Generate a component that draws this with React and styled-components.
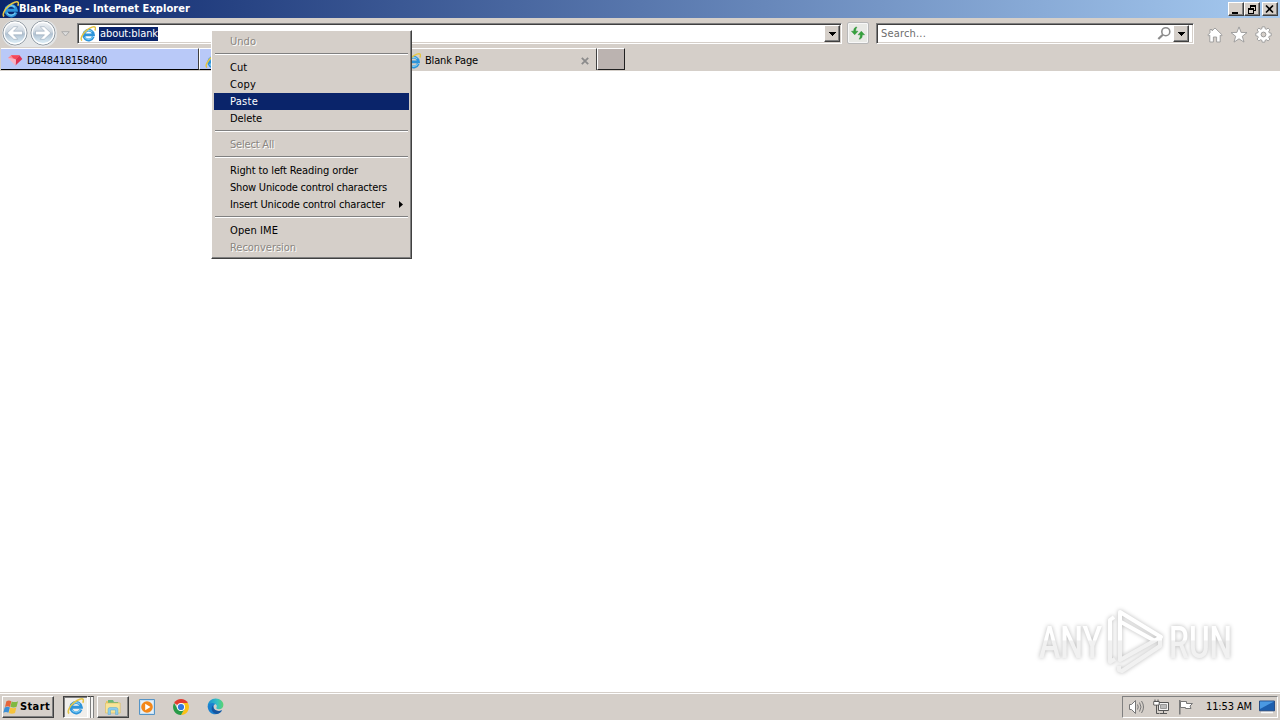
import React from 'react';
import styled, { createGlobalStyle, css } from 'styled-components';

const menuItems = [
  { label: 'Undo', disabled: true, width: 26 },
  { divider: true },
  { label: 'Cut', width: 17 },
  { label: 'Copy', width: 26 },
  { label: 'Paste', width: 28, active: true },
  { label: 'Delete', width: 32 },
  { divider: true },
  { label: 'Select All', disabled: true, width: 44 },
  { divider: true },
  { label: 'Right to left Reading order', width: 128 },
  { label: 'Show Unicode control characters', width: 157 },
  { label: 'Insert Unicode control character', width: 155, submenu: true },
  { divider: true },
  { label: 'Open IME', width: 48 },
  { label: 'Reconversion', disabled: true, width: 66 },
];

// Spreads a label over the width it has in Tahoma
const Label = ({ children, width }) => {
  const ref = React.useRef(null);
  const [spacing, setSpacing] = React.useState(0);

  React.useLayoutEffect(() => {
    const natural = ref.current.getBoundingClientRect().width;
    setSpacing((width - natural) / children.length);
  }, [children, width]);

  return (
    <Fitted ref={ref} style={{ letterSpacing: `${spacing}px` }}>
      {children}
    </Fitted>
  );
};

const IeIcon = ({ size = 16 }) => (
  <Icon width={size} height={size} viewBox="0 0 16 16">
    <path
      d="M13.2 10.8A4.9 4.9 0 1 1 13.5 8.8H5"
      fill="none"
      stroke="#2d94da"
      strokeWidth="2.8"
    />
    <path
      d="M12.6 11A4.6 4.6 0 0 1 4.6 11M4.4 6.8a4.8 4.8 0 0 1 7.7-.8"
      fill="none"
      stroke="#83d0f4"
      strokeWidth="1.1"
    />
    <path
      d="M2 14.6C-.2 13 2.4 7.7 6.8 4.2 10.3 1.3 14.4-.2 15.3 1.5c.4.8.1 2-.5 3"
      fill="none"
      stroke="#e5c544"
      strokeWidth="1.5"
    />
  </Icon>
);

const Arrow = ({ flipped }) => (
  <Icon width="26" height="26" viewBox="0 0 26 26">
    <defs>
      <linearGradient id="orb" x1="0" y1="0" x2="0" y2="1">
        <stop offset="0" stopColor="#f4f6f8" />
        <stop offset=".46" stopColor="#cbd5df" />
        <stop offset=".54" stopColor="#b0c1d1" />
        <stop offset="1" stopColor="#e6f7ff" />
      </linearGradient>
    </defs>
    <circle cx="13" cy="13" r="12" fill="url(#orb)" stroke="#8d969f" />
    <circle cx="13" cy="13" r="10.8" fill="none" stroke="#fff" strokeWidth="1.2" />
    <path
      transform={flipped ? 'matrix(-1 0 0 1 26 0)' : undefined}
      d="M5.2 13l6.6-6.3h4L11.5 11.2h9v3.6h-9l4.3 4.5h-4z"
      fill="#fff"
      stroke="#98a8b8"
      strokeWidth=".6"
    />
  </Icon>
);

const DownArrow = () => (
  <Icon width="7" height="4" viewBox="0 0 7 4" shapeRendering="crispEdges">
    <path d="M0 0h7L3.5 4z" fill="#000" />
  </Icon>
);

const RefreshIcon = () => (
  <Icon width="16" height="16" viewBox="0 0 16 16" fill="#35a23c" stroke="#1f862b" strokeWidth=".4">
    <path d="M7 2C4.6 2 3.6 3.8 3.7 6.2H1.4l3.3 3.6L8 6.2H5.7C5.6 4.6 6 3.4 7 2z" />
    <path d="M9 14.2c2.4 0 3.4-1.8 3.3-4.4h2.3l-3.3-3.6L8 9.8h2.3c.1 1.8-.3 3-1.3 4.4z" />
  </Icon>
);

const SearchIcon = () => (
  <Icon width="15" height="15" viewBox="0 0 15 15" fill="none" stroke="#8b8b8b">
    <circle cx="8.8" cy="5.7" r="4" strokeWidth="1.6" />
    <path d="M5.8 8.7L1.3 13" strokeWidth="2.2" />
  </Icon>
);

const HomeIcon = () => (
  <Icon width="16" height="16" viewBox="0 0 16 16" fill="#fff" stroke="#999" strokeWidth=".9">
    <path d="M8 1l7.2 7-1 1-1-.8V15H9.6v-5H6.4v5H2.8V8.2l-1 .8-1-1L3 5.8V2.5h2v1.4z" />
  </Icon>
);

const StarIcon = () => (
  <Icon width="18" height="17" viewBox="0 0 18 17" fill="#fff" stroke="#999" strokeWidth=".9">
    <path d="M9 .9l2.1 5.5 5.9.2-4.7 3.7 1.7 5.8L9 12.8l-5 3.3 1.7-5.8L1 6.6l5.9-.2z" />
  </Icon>
);

const GearIcon = () => (
  <Icon width="17" height="17" viewBox="0 0 17 17" stroke="#999">
    <path
      d="M7.2.8h2.6l.4 2 1.2.5 1.7-1.2 1.8 1.8-1.2 1.7.5 1.2 2 .4v2.6l-2 .4-.5 1.2 1.2 1.7-1.8 1.8-1.7-1.2-1.2.5-.4 2H7.2l-.4-2-1.2-.5-1.7 1.2-1.8-1.8 1.2-1.7-.5-1.2-2-.4V7.2l2-.4.5-1.2-1.2-1.7 1.8-1.8 1.7 1.2 1.2-.5z"
      fill="#fff"
      strokeWidth=".9"
    />
    <circle cx="8.5" cy="8.5" r="2.4" fill="#d5cfc9" />
  </Icon>
);

const FaviconIcon = () => (
  <Icon width="16" height="16" viewBox="0 0 16 16">
    <path d="M1 5l3-2.8h8.5L9 6.5z" fill="#ff8792" />
    <path d="M12.5 2.2L15.3 6 8.4 12.5 9 6z" fill="#dd3351" />
    <path d="M1 5l8 1.2-.6 6.3z" fill="#f8b4c4" />
    <path d="M4 2.2h8.5L9 6.5 6 5z" fill="#f4495c" />
  </Icon>
);

const WindowsIcon = () => (
  <Icon width="17" height="16" viewBox="0 0 17 16">
    <path d="M3.4 2.2C5 1.2 6.8 1.2 8.3 2.2L7 7.9C5.4 6.9 3.7 7 2 7.9z" fill="#e5653a" />
    <path d="M8.7 2.4c1.9 1 4.2.9 6.3-.2l-1.4 5.6c-2 1-4.2 1-6.2 0z" fill="#80b941" />
    <path d="M1.7 8.4c1.7-.9 3.6-1 5.2 0l-1.5 5.4c-1.5-1-3.3-1-5.1 0z" fill="#3a8fd6" />
    <path d="M7.2 8.5c1.9 1 4.1 1 6.1 0L12 14c-2 1-4.2 1-6.2 0z" fill="#f6c33b" />
  </Icon>
);

const FolderIcon = () => (
  <Icon width="18" height="18" viewBox="0 0 18 18">
    <path d="M2 3h5l1 1.5h7V15H2z" fill="#e9c768" />
    <path d="M4 2h5l1 2h4v4H4z" fill="#6bb878" />
    <path d="M1.5 5h14.7v10H1.5z" fill="#f8e498" stroke="#d9b95d" strokeWidth=".6" />
    <path d="M4 16.5v-5q0-2 2-2h6q2 0 2 2v5h-2.5V12h-5v4.5z" fill="#8bcceb" stroke="#5ca9cf" strokeWidth=".5" />
  </Icon>
);

const PlayerIcon = () => (
  <Icon width="16" height="16" viewBox="0 0 16 16">
    <path d="M.5.5h15v15H.5z" fill="#c9e1f3" stroke="#5594c6" />
    <path d="M2 2h12v12H2z" fill="#fff" opacity=".5" />
    <circle cx="8" cy="8" r="5.8" fill="#f38719" />
    <path d="M6.2 4.7v6.6L11.5 8z" fill="#fff" />
  </Icon>
);

const ChromeIcon = () => (
  <Icon width="16" height="16" viewBox="0 0 16 16">
    <path d="M8 8L1.1 4A8 8 0 0 1 14.9 4z" fill="#e33b2e" />
    <path d="M8 4h6.9A8 8 0 0 1 8 16l3.5-6z" fill="#fbc116" />
    <path d="M1.1 4l3.4 6L8 12l3.4-2L8 16A8 8 0 0 1 1.1 4z" fill="#299b48" />
    <circle cx="8" cy="8" r="4" fill="#fff" />
    <circle cx="8" cy="8" r="3.1" fill="#3477df" />
  </Icon>
);

const EdgeIcon = () => (
  <Icon width="17" height="17" viewBox="0 0 17 17">
    <defs>
      <linearGradient id="edge" x1="0" x2="1">
        <stop offset="0" stopColor="#188ed2" />
        <stop offset=".6" stopColor="#35bfc4" />
        <stop offset="1" stopColor="#5bd56c" />
      </linearGradient>
    </defs>
    <path d="M.7 7.6C1.2 3.5 4.4.6 8.6.6c4.7 0 7.8 3.1 7.8 6.3 0 2.6-2.2 4.3-4.5 4.3-2.1 0-3-.9-2.4-1.7C11 6.7 7.4 3.6.7 7.6z" fill="url(#edge)" />
    <path d="M.6 8C2.5 4.6 6.7 4.4 8.4 6 5.5 7 6.2 12.3 10.4 13c2 .4 3.6-.2 4.7-.7C12 18 1.2 18.4.6 8z" fill="#1a80cf" />
    <path d="M6 7.3c-3 3-.7 8 3.5 8.8 2.7-.4 4.6-2 5.5-3.8-4 1.8-9.5-.2-9-5z" fill="#17559f" />
  </Icon>
);

const VolumeIcon = () => (
  <Icon width="17" height="16" viewBox="0 0 17 16" fill="none" stroke="#777">
    <path d="M1.5 5.5h2l4-4v13l-4-4h-2z" fill="#fff" />
    <path d="M9.5 5.5q1.5 2.5 0 5M11.5 3.5q3 4.5 0 9M13.5 2q4 6 0 12" />
  </Icon>
);

const NetworkIcon = () => (
  <Icon width="17" height="16" viewBox="0 0 17 16" fill="none" stroke="#555">
    <path d="M5.5 3.5h10v8h-10z" fill="#f4f4f4" />
    <path d="M7.5 5.5h6v4h-6z" fill="#bbb" stroke="#999" />
    <path d="M10.5 12v2M7 14.5h7M2 .5v2M5 .5v2M.8 2.5h5.4v3.5H.8zM3.5 6v8.5h3" />
    <path d="M1.3 3h4.4v2.5H1.3z" fill="#fff" stroke="none" />
  </Icon>
);

const FlagIcon = () => (
  <Icon width="16" height="16" viewBox="0 0 16 16" stroke="#777">
    <path d="M2.5 2.5h6v2h6L12 7l1 2.5H7.5v-1h-5z" fill="#fff" />
    <path d="M1.8 1v14.5" strokeWidth="1.5" />
  </Icon>
);

const DesktopIcon = () => (
  <Icon width="16" height="14" viewBox="0 0 16 14">
    <path d="M.5 1h15v9.8H.5z" fill="#1d5fae" stroke="#294e85" />
    <path d="M1 1.5h14L1 9z" fill="#4a99e2" />
    <path d="M2 12.5h12" stroke="#f8f8f8" strokeWidth="1.5" />
  </Icon>
);

const Watermark = () => (
  <Mark width="216" height="72" viewBox="0 0 216 72">
    <defs>
      <linearGradient id="fade" x1="0" y1="0" x2="0" y2="72" gradientUnits="userSpaceOnUse">
        <stop offset=".46" stopColor="#fff" />
        <stop offset=".47" stopColor="#f1f1f1" />
      </linearGradient>
    </defs>
    <g fill="url(#fade)">
      <text x="4" y="51" textLength="63" lengthAdjust="spacingAndGlyphs">ANY</text>
      <text x="134" y="51" textLength="63" lengthAdjust="spacingAndGlyphs">RUN</text>
    </g>
    <g fill="none" stroke="url(#fade)" strokeWidth="4" strokeLinejoin="round">
      <path d="M85 48V5l41 25-41 23z" />
      <path d="M79 10l-4 3v42l5-3M86 15l34 19M84 59v4l3 1 38-25v-7" />
    </g>
  </Mark>
);

const App = () => {
  return (
    <>
      <GlobalStyle />
      <Desktop>
        <TitleBar>
          <Title>
            <IeIcon size={17} />
            <Label width={171}>Blank Page - Internet Explorer</Label>
          </Title>
          <WindowButtons>
            <WindowButton>
              <Icon width="10" height="9" viewBox="0 0 10 9">
                <path d="M1 7h6v2H1z" />
              </Icon>
            </WindowButton>
            <WindowButton>
              <Icon width="10" height="9" viewBox="0 0 10 9" shapeRendering="crispEdges">
                <path d="M3 0h6v6H7V5h1V2H4v1H3zM1 3h6v6H1zM2 5v3h4V5z" fillRule="evenodd" />
              </Icon>
            </WindowButton>
            <WindowButton $gap>
              <Icon width="10" height="9" viewBox="0 0 10 9">
                <path d="M1 .5l7 7M8 .5l-7 7" stroke="#000" strokeWidth="1.6" />
              </Icon>
            </WindowButton>
          </WindowButtons>
        </TitleBar>

        <NavBar>
          <History>
            <Arrow />
            <Arrow flipped />
          </History>
          <HistoryMenu>
            <Icon width="9" height="6" viewBox="0 0 9 6">
              <path d="M.7.7h7.6L4.5 5z" fill="#ddd" stroke="#aaa" />
            </Icon>
          </HistoryMenu>
          <Field $width={765}>
            <IeIcon />
            <Selected>
              <Label width={58}>about:blank</Label>
            </Selected>
            <DropButton>
              <DownArrow />
            </DropButton>
          </Field>
          <Refresh>
            <RefreshIcon />
          </Refresh>
          <Field $width={318}>
            <Placeholder>
              <Label width={45}>Search...</Label>
            </Placeholder>
            <SearchIcon />
            <DropButton $inset>
              <DownArrow />
            </DropButton>
          </Field>
          <Tools>
            <HomeIcon />
            <StarIcon />
            <GearIcon />
          </Tools>
        </NavBar>

        <TabBar>
          <Tab $width={198}>
            <FaviconIcon />
            <Label width={80}>DB48418158400</Label>
          </Tab>
          <Tab $width={200}>
            <IeIcon />
          </Tab>
          <Tab $width={198} $active>
            <IeIcon />
            <Label width={53}>Blank Page</Label>
            <Close>
              <Icon width="8" height="8" viewBox="0 0 8 8">
                <path d="M.8.8l6.4 6.4M7.2.8L.8 7.2" stroke="#8b8b8b" strokeWidth="1.8" />
              </Icon>
            </Close>
          </Tab>
          <NewTab />
        </TabBar>

        <Page>
          <Watermark />
        </Page>

        <TaskBar>
          <Start>
            <WindowsIcon />
            <Label width={30}>Start</Label>
          </Start>
          <TaskGroup>
            <TaskButton $pressed>
              <IeIcon size={17} />
            </TaskButton>
            <Stack />
            <Stack />
          </TaskGroup>
          <TaskButton $wide>
            <FolderIcon />
          </TaskButton>
          <Pinned>
            <PlayerIcon />
            <ChromeIcon />
            <EdgeIcon />
          </Pinned>
          <Tray>
            <VolumeIcon />
            <NetworkIcon />
            <FlagIcon />
            <Clock>
              <Label width={46}>11:53 AM</Label>
            </Clock>
            <DesktopIcon />
          </Tray>
        </TaskBar>

        <Menu>
          {menuItems.map((item, index) =>
            item.divider ? (
              <Divider key={index} />
            ) : (
              <MenuItem key={item.label} $active={item.active} $disabled={item.disabled}>
                <Label width={item.width}>{item.label}</Label>
                {item.submenu && (
                  <Icon width="4" height="7" viewBox="0 0 4 7">
                    <path d="M0 0l4 3.5L0 7z" />
                  </Icon>
                )}
              </MenuItem>
            )
          )}
        </Menu>
      </Desktop>
    </>
  );
};

export default App;

const GlobalStyle = createGlobalStyle`
  * {
    box-sizing: border-box;
  }
  body {
    margin: 0;
    overflow: hidden;
  }
`;

const face = '#d5cfc9';

const raised = css`
  background: ${face};
  border: 1px solid;
  border-color: #fff #404040 #404040 #fff;
  box-shadow: inset -1px -1px #808080;
`;

const Icon = styled.svg`
  display: block;
  flex: none;
`;

const Fitted = styled.span`
  display: inline-block;
  flex: none;
  white-space: pre;
`;

const Desktop = styled.div`
  position: relative;
  width: 1280px;
  height: 720px;
  display: flex;
  flex-direction: column;
  background: #fff;
  color: #000;
  font: 11px/14px 'DejaVu Sans Condensed', 'DejaVu Sans', sans-serif;
  font-stretch: condensed;
`;

const TitleBar = styled.header`
  height: 18px;
  display: flex;
  align-items: center;
  justify-content: space-between;
  padding: 0 2px;
  background: linear-gradient(90deg, #0a246a, #a6caf0);
`;

const Title = styled.div`
  display: flex;
  align-items: center;
  color: #fff;
  font-weight: 700;
`;

const WindowButtons = styled.div`
  display: flex;
`;

const WindowButton = styled.div`
  ${raised}
  width: 16px;
  height: 14px;
  display: flex;
  align-items: center;
  justify-content: center;
  margin-left: ${({ $gap }) => ($gap ? '2px' : 0)};
`;

const NavBar = styled.nav`
  height: 30px;
  display: flex;
  align-items: flex-start;
  padding-top: 5px;
  background: ${face};
  border-top: 1px solid ${face};
`;

const History = styled.div`
  display: flex;
  gap: 2px;
  height: 27px;
  width: 55px;
  margin: -4px 0 0 2px;
  border-radius: 13px;
  background: #e3e5e6;
`;

const HistoryMenu = styled.div`
  width: 21px;
  padding: 7px 0 0 4px;
`;

const Field = styled.div`
  width: ${({ $width }) => $width}px;
  height: 21px;
  margin: -1px 0 0 -1px;
  display: flex;
  align-items: center;
  padding-left: 2px;
  background: #fff;
  border: 1px solid;
  border-color: #808080 #fff #fff #808080;
  box-shadow: inset 1px 1px #404040, inset -1px -1px ${face};
`;

const Selected = styled.span`
  height: 14px;
  margin-left: 3px;
  padding: 0 0 0 1px;
  background: #0a246a;
  color: #fff;
`;

const Placeholder = styled.span`
  flex: 1;
  padding-left: 2px;
  color: #6d6d6d;
`;

const DropButton = styled.div`
  ${raised}
  width: 16px;
  height: 17px;
  display: flex;
  align-items: center;
  justify-content: center;
  margin-left: ${({ $inset }) => ($inset ? '1px' : 'auto')};
  margin-right: ${({ $inset }) => ($inset ? '4px' : '1px')};
`;

const Refresh = styled.div`
  width: 22px;
  height: 22px;
  margin: -2px 8px 0 5px;
  display: grid;
  place-items: center;
  background: #e8e9e5;
  border: 1px solid #b8b8b8;
  border-radius: 2px;
  box-shadow: inset 0 0 0 1px #f8f8f8;
`;

const Tools = styled.div`
  display: flex;
  align-items: center;
  gap: 7px;
  margin: 2px 0 0 13px;
`;

const TabBar = styled.div`
  height: 23px;
  display: flex;
  align-items: flex-start;
  padding-left: 1px;
  background: ${face};
`;

const Tab = styled.div`
  width: ${({ $width }) => $width}px;
  height: 22px;
  display: flex;
  align-items: center;
  gap: 4px;
  padding: ${({ $active }) => ($active ? 2 : 3)}px 7px 0 6px;
  background: ${({ $active }) => ($active ? face : '#b9c9f8')};
  border-top: 1px solid #fff;
  border-right: 1px solid #404040;
  border-bottom: ${({ $active }) => ($active ? 0 : '1px solid #000')};
  & + & {
    padding-left: 5px;
    border-left: 1px solid #fff;
  }
`;

const Close = styled.div`
  margin-left: auto;
`;

const NewTab = styled.div`
  width: 28px;
  height: 22px;
  background: #bbb3b0;
  border: 1px solid;
  border-color: #fff #202020 #202020 #fff;
`;

const Page = styled.main`
  position: relative;
  flex: 1;
  background: #fff;
`;

const Mark = styled.svg`
  position: absolute;
  left: 1035px;
  top: 536px;
  overflow: visible;
  filter: drop-shadow(0 0 2px rgba(0, 0, 0, 0.28));
  font: 500 44px/1 'Roboto', sans-serif;
`;

const TaskBar = styled.footer`
  height: 28px;
  display: flex;
  align-items: center;
  padding: 1px 2px 1px;
  background: ${face};
  border-top: 1px solid ${face};
  box-shadow: inset 0 1px #fff;
`;

const Start = styled.div`
  ${raised}
  width: 52px;
  height: 22px;
  display: flex;
  align-items: center;
  font-weight: 700;
`;

const TaskGroup = styled.div`
  display: flex;
  margin: 0 3px 0 9px;
`;

const TaskButton = styled.div`
  ${raised}
  width: ${({ $wide }) => ($wide ? 32 : 25)}px;
  height: 22px;
  display: grid;
  place-items: center;
  ${({ $pressed }) =>
    $pressed &&
    css`
      background: #f0eeeb;
      border-color: #404040 #fff #fff #404040;
      box-shadow: inset 1px 1px #808080;
    `}
`;

const Stack = styled.div`
  width: 3px;
  height: 22px;
  border-top: 1px solid #404040;
  border-right: 1px solid #808080;
  background: #f6f5f3;
`;

const Pinned = styled.div`
  display: flex;
  align-items: center;
  gap: 18px;
  margin-left: 10px;
`;

const Tray = styled.div`
  width: 156px;
  height: 22px;
  display: flex;
  align-items: center;
  gap: 8px;
  margin-left: auto;
  padding-left: 5px;
  border: 1px solid;
  border-color: #808080 #fff #fff #808080;
`;

const Clock = styled.div`
  margin: 0 -1px 0 4px;
`;

const Menu = styled.div`
  ${raised}
  position: absolute;
  left: 211px;
  top: 30px;
  width: 201px;
  height: 229px;
  padding: 2px;
`;

const MenuItem = styled.div`
  height: 17px;
  display: flex;
  align-items: center;
  justify-content: space-between;
  padding: 0 6px 0 16px;
  ${({ $active }) =>
    $active &&
    css`
      background: #0a246a;
      color: #fff;
    `}
  ${({ $disabled }) =>
    $disabled &&
    css`
      color: #8a8681;
      text-shadow: 1px 1px #fff;
    `}
`;

const Divider = styled.div`
  height: 2px;
  margin: 3px 1px 4px;
  border-top: 1px solid #808080;
  border-bottom: 1px solid #fff;
`;
